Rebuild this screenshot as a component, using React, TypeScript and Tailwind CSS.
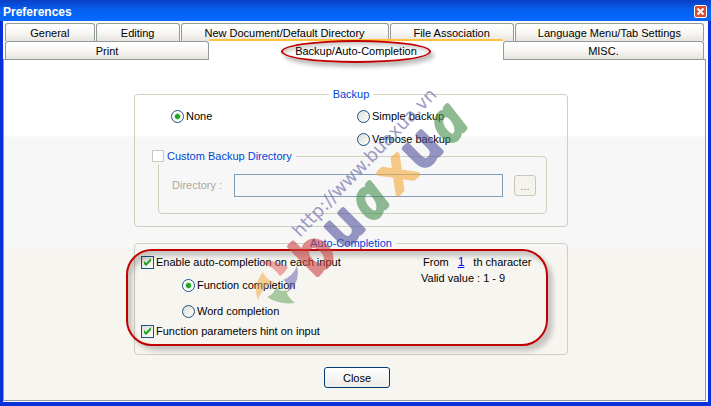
import type { ReactNode } from "react";

const tabBase =
  "h-[18px] border border-b-0 border-[#919b9c] rounded-t-[3px] bg-linear-to-b from-white via-[#f8f7f4] to-[#e6e4dc] text-center leading-[18px] whitespace-nowrap";

function Tab({ label, className }: { label: string; className: string }) {
  return (
    <button type="button" role="tab" aria-selected={false} className={`${tabBase} ${className}`}>
      {label}
    </button>
  );
}

function Group({
  legend,
  className,
  children,
}: {
  legend: string;
  className: string;
  children: ReactNode;
}) {
  return (
    <fieldset
      className={`relative min-w-0 rounded-[4px] border border-[#d0d0bf] ${className}`}
    >
      <legend className="mx-auto h-3 px-1 leading-3 text-[#0046d5]">{legend}</legend>
      {children}
    </fieldset>
  );
}

function Radio({
  name,
  label,
  checked,
  className,
}: {
  name: string;
  label: string;
  checked?: boolean;
  className?: string;
}) {
  return (
    <label className={`flex h-4 items-center gap-[2px] ${className ?? ""}`}>
      <input
        type="radio"
        name={name}
        defaultChecked={checked}
        className="size-[13px] shrink-0 appearance-none rounded-full border border-[#1c5180] bg-linear-to-br from-[#dcdcd7] to-white checked:bg-[radial-gradient(circle,#21a121_0_2px,#c9e8c9_3px,#fff_4px)]"
      />
      {label}
    </label>
  );
}

function CheckBox({ label, className }: { label: string; className?: string }) {
  return (
    <label className={`flex h-4 items-center gap-[2px] ${className ?? ""}`}>
      <span className="relative block size-[13px] shrink-0">
        <input
          type="checkbox"
          defaultChecked
          className="peer block size-[13px] appearance-none border border-[#1c5180] bg-linear-to-br from-[#dcdcd7] to-white"
        />
        <svg
          viewBox="0 0 13 13"
          className="pointer-events-none absolute inset-0 hidden peer-checked:block"
          aria-hidden="true"
        >
          <path d="M3 5v3l2 2 5-5V2L5 7z" fill="#21a121" />
        </svg>
      </span>
      {label}
    </label>
  );
}

function Watermark() {
  return (
    <svg
      width="235"
      height="260"
      viewBox="245 80 235 260"
      className="pointer-events-none absolute top-[80px] left-[245px]"
      aria-hidden="true"
    >
      <g opacity="0.5">
        <path d="M260 262Q276 259 288 267L285 272L280 276Q273 266 260 262z" fill="#e05a5a" />
        <path d="M297 266Q301 284 286 293Q292 286 283 280Q293 276 297 266z" fill="#5c5cae" />
        <path d="M263 272Q266 280 275 282Q263 286 258 300Q252 286 263 272z" fill="#f4a838" />
        <path d="M276 286Q280 293 286 290Q288 298 295 303Q279 305 267 297Q275 294 276 286z" fill="#5c9f50" />
      </g>
      <text
        transform="translate(300 238) rotate(-46)"
        fontFamily="'DejaVu Sans', sans-serif"
        fontSize="18"
        fill="#7373ad"
        opacity="0.7"
      >
        http://www.buaxua.vn
      </text>
      <g
        fontFamily="'DejaVu Sans', sans-serif"
        fontSize="52"
        textAnchor="middle"
        strokeLinejoin="round"
        strokeWidth="5"
        opacity="0.6"
      >
        <text transform="translate(326 266) rotate(-45)" fill="#cb4444" stroke="#cb4444">b</text>
        <text transform="translate(355 238) rotate(-45)" fill="#5454a0" stroke="#5454a0">u</text>
        <text
          transform="translate(382 211) rotate(-50)"
          fontFamily="'Open Sans', sans-serif"
          fontStyle="italic"
          fill="#458f4d"
          stroke="#458f4d"
        >
          a
        </text>
        <text transform="translate(408 184) rotate(-45)" fill="#f6a93c" stroke="#f6a93c">x</text>
        <text transform="translate(433 160) rotate(-45)" fill="#5454a0" stroke="#5454a0">u</text>
        <text
          transform="translate(460 134) rotate(-50)"
          fontFamily="'Open Sans', sans-serif"
          fontStyle="italic"
          fill="#458f4d"
          stroke="#458f4d"
        >
          a
        </text>
      </g>
    </svg>
  );
}

export default function App() {
  return (
    <main className="relative flex min-h-screen flex-col bg-[#0831d9] font-['Liberation_Sans',sans-serif] text-[11px] text-black">
      <header className="flex h-[21px] items-center justify-between bg-linear-to-b from-[#0b3fc4] via-[#0562f3] to-[#0468fb] pr-1 pl-[3px]">
        <h1 className="pt-[3px] text-[12px] leading-4 font-bold text-white">Preferences</h1>
        <button
          type="button"
          aria-label="Close window"
          className="mt-[2px] flex size-[13px] items-center justify-center rounded-[2px] border border-white bg-[#dc4c2c]"
        >
          <svg width="9" height="9" viewBox="0 0 9 9" aria-hidden="true">
            <path d="M1.5 1.5l6 6M7.5 1.5l-6 6" stroke="#fff" strokeWidth="2" />
          </svg>
        </button>
      </header>

      <div className="mr-[3px] mb-1 ml-[3px] flex grow flex-col bg-[#fbfbf9]">
        <div role="tablist" className="relative pt-[2px] pr-1 pl-[2px]">
          <div className="flex gap-px">
            <Tab label="General" className="grow-[89] basis-0" />
            <Tab label="Editing" className="grow-[83] basis-0" />
            <Tab label="New Document/Default Directory" className="grow-[209] basis-0" />
            <Tab label="File Association" className="grow-[124] basis-0" />
            <Tab label="Language Menu/Tab Settings" className="grow-[190] basis-0" />
          </div>
          <div className="flex items-end">
            <Tab label="Print" className="grow-[203] basis-0" />
            <button
              type="button"
              role="tab"
              aria-selected
              className="relative z-10 -mt-[2px] -mb-px h-[21px] grow-[295] basis-0 rounded-t-[2px] border-t-2 border-[#ffc03c] bg-white leading-4"
            >
              <span className="relative inline-block">
                Backup/Auto-Completion
                <span className="absolute -inset-x-[14px] -top-[3px] h-[23px] rounded-[50%] border-2 border-[#c00000] shadow-[3px_4px_4px_#0004,inset_2px_3px_4px_#0003]" />
              </span>
            </button>
            <Tab label="MISC." className="grow-[200] basis-0" />
          </div>
        </div>

        <section
          role="tabpanel"
          className="mr-[2px] mb-px flex grow flex-col border border-[#919b9c] bg-[linear-gradient(#fff_0_76px,#f7f7f7_77px_186px,#f7f5f0_194px)] pt-[28px] pr-[137px] pb-3 pl-[130px]"
        >
          <Group legend="Backup" className="h-[139px] px-[17px]">
            <div className="grid grid-cols-[186px_1fr] gap-y-[7px] pt-2 pl-[19px]">
              <Radio name="backup" label="None" checked />
              <Radio name="backup" label="Simple backup" />
              <Radio name="backup" label="Verbose backup" className="col-start-2" />
            </div>
            <fieldset
              disabled
              className="mt-px mr-[3px] ml-[6px] min-w-0 rounded-[4px] border border-[#d0d0bf] pb-4 pl-[13px]"
            >
              <legend className="-ml-[20px] h-4 pr-1 text-[#0046d5]">
                <label className="flex h-4 items-center gap-[3px]">
                  <input
                    type="checkbox"
                    className="size-3 appearance-none border border-[#cac8bb] bg-white"
                  />
                  Custom Backup Directory
                </label>
              </legend>
              <div className="flex items-center pt-[10px] pr-[10px]">
                <label htmlFor="directory" className="w-[62px] text-[#aca899]">
                  Directory :
                </label>
                <input
                  id="directory"
                  type="text"
                  className="h-[23px] min-w-0 grow border border-[#7f9db9] bg-transparent px-1"
                />
                <button
                  type="button"
                  className="ml-[11px] h-[21px] w-[22px] rounded-[3px] border border-[#c9c7ba] bg-[#f5f4ea] leading-3 text-[#8c897c]"
                >
                  ...
                </button>
              </div>
            </fieldset>
          </Group>

          <Group legend="Auto-Completion" className="mt-[10px] h-[118px] px-[6px]">
            <div className="flex items-start justify-between pt-[5px]">
              <CheckBox label="Enable auto-completion on each input" />
              <div className="w-[140px]">
                <div className="flex gap-[9px] pl-[2px] leading-4">
                  <span>From</span>
                  <a href="#first-character" className="text-[12px] text-[#0000ff] underline">
                    1
                  </a>
                  <span>th character</span>
                </div>
                <p className="leading-4">Valid value : 1 - 9</p>
              </div>
            </div>
            <div className="-mt-[9px] space-y-[10px] pl-[41px]">
              <Radio name="completion" label="Function completion" checked />
              <Radio name="completion" label="Word completion" />
            </div>
            <CheckBox label="Function parameters hint on input" className="mt-1" />
            <span className="pointer-events-none absolute top-0 right-[19px] -left-[9px] h-[97px] rounded-[26px] border-2 border-[#c00000] shadow-[5px_5px_5px_#0003,inset_4px_5px_5px_#0003]" />
          </Group>

          <button
            type="button"
            className="mt-3 ml-[190px] h-[21px] w-[66px] rounded-[3px] border border-[#003c74] bg-linear-to-b from-white to-[#ecebe6] leading-4"
          >
            Close
          </button>
        </section>
      </div>
      <Watermark />
    </main>
  );
}
